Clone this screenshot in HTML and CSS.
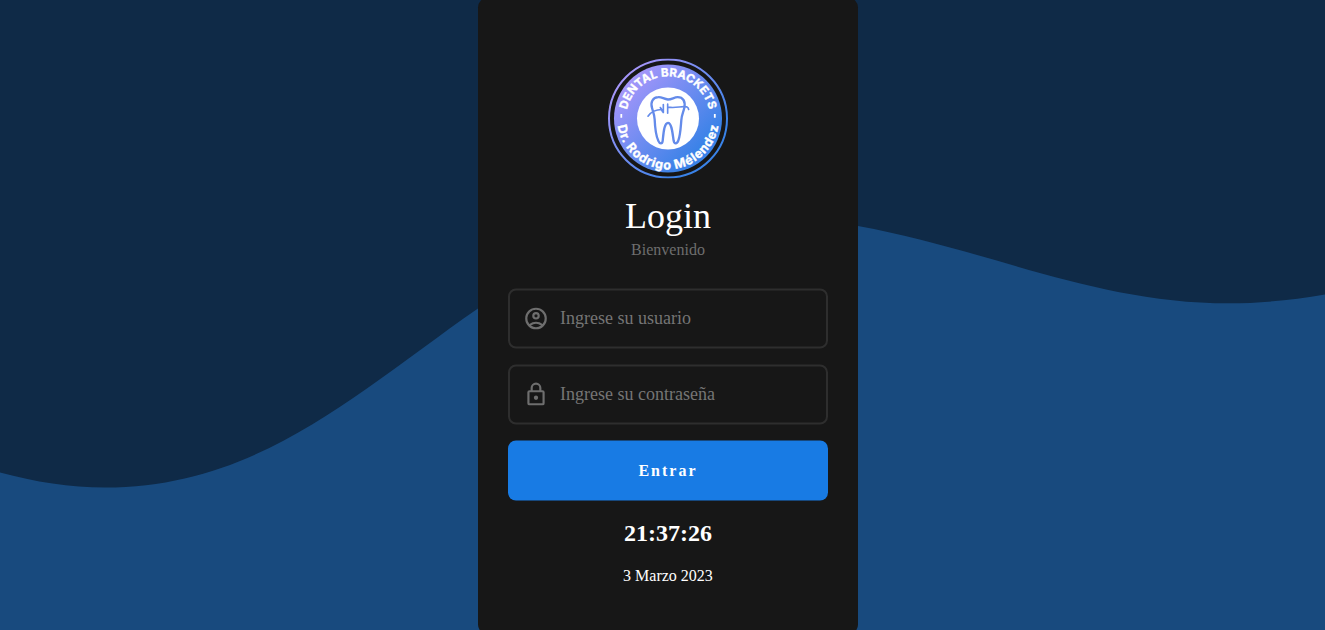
FILE: index.html
```
<!DOCTYPE html>
<html lang="es">
<head>
<meta charset="utf-8">
<title>Login</title>
<link rel="stylesheet" href="styles.css">
</head>
<body>
<svg class="wave" viewBox="0 0 1325 630" preserveAspectRatio="none" aria-hidden="true">
  <path d="M0 472.5C35 482 70 487.5 105 487.5C260 487.5 360 390 478 308.5C600 225 720 201 858 226C990 250 1095 303.3 1229 303.3C1260 303.3 1293 300 1325 294.5V630H0Z"/>
</svg>
<main class="card">
  <svg class="logo" viewBox="0 0 120 120" role="img" aria-label="Dental Brackets">
    <defs>
      <linearGradient id="brand" x1="0.12" y1="0.18" x2="0.78" y2="0.8">
        <stop offset="0" stop-color="#a596fa"/>
        <stop offset="1" stop-color="#3982e7"/>
      </linearGradient>
      <path id="arc-top" d="M18 60A42 42 0 0 1 102 60"/>
      <path id="arc-bottom" d="M9.2 60A50.8 50.8 0 0 0 110.8 60"/>
    </defs>
    <circle cx="60" cy="60" r="59" fill="#171717" stroke="url(#brand)" stroke-width="2"/>
    <circle cx="60" cy="60" r="54" fill="url(#brand)"/>
    <circle cx="60" cy="60" r="31" fill="#fff"/>
    <g class="logo-text">
      <text class="arc-label" text-anchor="middle" textLength="114"><textPath href="#arc-top" startOffset="50%" textLength="114">DENTAL BRACKETS</textPath></text>
      <text class="arc-label arc-label-name" text-anchor="middle" textLength="145"><textPath href="#arc-bottom" startOffset="50%" textLength="145">Dr. Rodrigo Mélendez</textPath></text>
    </g>
    <path d="M13.3 55.5v3.8M106.8 55.5v3.8" stroke="#fff" stroke-width="1.8"/>
    <g class="tooth" transform="translate(28 26) scale(.33333)">
      <path d="M96 45C84 44 77 37 67 38C50 39 43 53 48 70C51 82 55 89 56 105C57 130 60 154 67 169C71 179 79 179 80 169C82 151 84 115 96 115C108 115 110 151 113 169C115 179 123 179 127 168C133 153 134 130 136 107C137 91 142 84 145 70C149 50 141 38 125 38C114 38 108 45 96 45"/>
      <path class="wire" d="M36 95C46 81 60 75 78 75M73 69L80 82M82 60V84M95 59V86M97 68C120 72 137 64 152 67Q157 69 158 75"/>
    </g>
  </svg>
  <h1 class="title">Login</h1>
  <p class="subtitle">Bienvenido</p>
  <form class="form">
    <label class="field">
      <svg class="icon" viewBox="0 0 24 24"><path d="M12 2a10 10 0 1 0 0 20 10 10 0 0 0 0-20zM7.35 18.5a8 8 0 0 1 9.3 0 8 8 0 0 1-9.3 0zM18.14 17.12a10 10 0 0 0-12.28 0 8 8 0 1 1 12.28 0zM12 6a3.5 3.5 0 1 0 0 7 3.5 3.5 0 0 0 0-7zm0 5a1.5 1.5 0 1 1 0-3 1.5 1.5 0 0 1 0 3z"/></svg>
      <input class="input" type="text" placeholder="Ingrese su usuario">
    </label>
    <label class="field">
      <svg class="icon" viewBox="0 0 24 24"><path d="M18 8h-1V6A5 5 0 0 0 7 6v2H6a2 2 0 0 0-2 2v10a2 2 0 0 0 2 2h12a2 2 0 0 0 2-2V10a2 2 0 0 0-2-2zM9 6a3 3 0 0 1 6 0v2H9zM18 20H6V10h12zM12 17a2 2 0 1 0 0-4 2 2 0 0 0 0 4z"/></svg>
      <input class="input" type="password" placeholder="Ingrese su contraseña">
    </label>
    <button class="submit" type="button">Entrar</button>
  </form>
  <div class="time">21:37:26</div>
  <div class="date">3 Marzo 2023</div>
</main>
</body>
</html>
```

FILE: styles.css
```
* {
  box-sizing: border-box;
  margin: 0;
}

body {
  display: flex;
  justify-content: center;
  align-items: flex-start;
  height: 100vh;
  overflow: hidden;
  background: #0f2a47;
  color: #fff;
  font-family: "Liberation Serif", "Times New Roman", serif;
}

.wave {
  position: absolute;
  inset: 0;
  width: 100%;
  height: 100%;
  fill: #184a7e;
}

.card {
  display: flex;
  flex-direction: column;
  align-items: center;
  flex: none;
  width: 380px;
  height: 637px;
  margin: -2px 0 0 11px;
  padding: 61px 30px 0;
  border-radius: 10px;
  background: #171717;
  transform: translateY(-0.5px);
}

.logo {
  width: 120px;
  height: 120px;
  flex: none;
}

.logo-text {
  fill: #fff;
  stroke: #fff;
  stroke-width: 0.35;
}

.arc-label {
  font: 700 11.5px Inter, sans-serif;
}

.arc-label-name {
  font-size: 12.5px;
}

.tooth {
  fill: none;
  stroke: #648bea;
  stroke-width: 7;
  stroke-linecap: round;
  stroke-linejoin: round;
}

.wire {
  stroke-width: 5;
}

.title {
  margin-top: 17px;
  font-size: 36px;
  font-weight: 400;
  line-height: 41px;
}

.subtitle {
  margin-top: 4px;
  color: #6e6e6e;
  font-size: 16px;
  line-height: 18px;
}

.form {
  display: flex;
  flex-direction: column;
  gap: 16px;
  width: 100%;
  margin-top: 30px;
}

.field {
  display: flex;
  align-items: center;
  gap: 11px;
  height: 60px;
  padding: 0 14px 0 13px;
  border: 2px solid #2e2e2e;
  border-radius: 8px;
}

.icon {
  width: 26px;
  height: 26px;
  flex: none;
  fill: #6e6e6e;
}

.input {
  flex: 1;
  min-width: 0;
  height: 56px;
  padding: 0 0 1px;
  border: 0;
  outline: 0;
  background: none;
  color: #fff;
  font: 18px "Liberation Serif", "Times New Roman", serif;
}

.input::placeholder {
  color: #757575;
}

.submit {
  height: 60px;
  border: 0;
  border-radius: 8px;
  background: #187be4;
  color: #fff;
  font: 700 16px "Liberation Serif", "Times New Roman", serif;
  letter-spacing: 2px;
}

.time {
  margin-top: 19px;
  font-size: 24px;
  font-weight: 700;
  line-height: 27px;
}

.date {
  margin-top: 20px;
  font-size: 16px;
  line-height: 18px;
}
```
